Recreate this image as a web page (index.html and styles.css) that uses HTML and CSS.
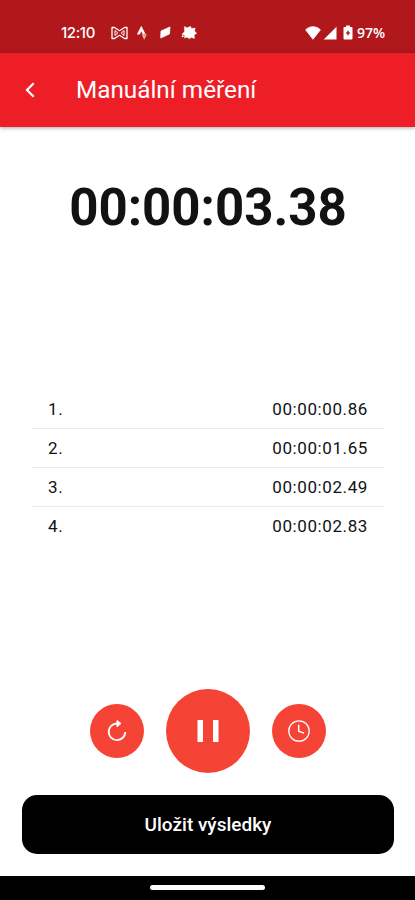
FILE: index.html
```html
<!DOCTYPE html>
<html lang="cs">
<head>
    <meta charset="UTF-8">
    <meta name="viewport" content="width=device-width, initial-scale=1">
    <title>Manuální měření</title>
    <link rel="stylesheet" href="styles.css">
</head>
<body>
    <div class="status-bar">
        <span class="clock">12:10</span>
        <div class="notifications">
            <svg width="17" height="14" viewBox="0 0 17 14" fill="none" stroke="#fff" stroke-width="1.3" stroke-linejoin="round">
                <path d="M1 1.500h2.500l5 3.200 5-3.200H16v11h-2.500l-5-3.200-5 3.200H1z"/>
                <path d="M4 4.500v5l2.800-2.500zM13 4.500v5L10.200 7z" stroke-width="1"/>
            </svg>
            <svg width="11" height="14" viewBox="0 0 11 14">
                <path d="M4.300.3l4 7.900H6.100L4.300 5 2.600 8.200H.3z" fill="#fff" stroke="#fff" stroke-width=".5"/>
                <path d="M4.700 8.300h1.600l.9 1.800.9-1.800h1.700L7.200 13.700z" fill="#f3b8b4"/>
            </svg>
            <svg width="11" height="13" viewBox="0 0 11 13">
                <path d="M1 5L10 1 9.400 8 .7 12z" fill="#fff" stroke="#fff" stroke-width=".8" stroke-linejoin="round"/>
            </svg>
            <svg width="16" height="14" viewBox="0 0 16 14">
                <path d="M3.300.5l3 1.300L9.500.3l1 2.200 3.700-.5-.7 3 2.300 2.300-2.600 1.600.3 3.500-3.200-.8-2.100 1.200-2-1.500L3.500 12l.2-2.800L.8 8.300l2.700-2.600z" fill="#fff" stroke="#fff" stroke-width=".4"/>
                <circle cx="1.700" cy="10.300" r="1" fill="#fff"/>
            </svg>
        </div>
        <div class="indicators">
            <svg width="16" height="14" viewBox="0 0 16 14">
                <path d="M.6 3.800C4.800-.3 11.200-.3 15.400 3.800L8 13.300z" fill="#fff" stroke="#fff" stroke-width=".8" stroke-linejoin="round"/>
            </svg>
            <svg class="signal" width="14" height="14" viewBox="0 0 14 14">
                <path d="M13.500.7v12.800H.7z" fill="#fff"/>
            </svg>
            <svg class="battery" width="10" height="15" viewBox="0 0 10 15">
                <path d="M3 .5h4V2h1.500Q9.500 2 9.500 3v10.500q0 1-1 1h-7q-1 0-1-1V3q0-1 1-1H3z" fill="#fff"/>
                <path d="M5 5.800v4.400M3.200 8h3.600" stroke="#b1181b" stroke-width="1.400"/>
            </svg>
            <span class="percent">97%</span>
        </div>
    </div>

    <header class="app-bar">
        <svg class="back" width="12" height="18" viewBox="0 0 12 18" fill="none" stroke="#fff" stroke-width="2.200">
            <path d="M9.700 2.300L3 9l6.700 6.700"/>
        </svg>
        <h1>Manuální měření</h1>
    </header>

    <main>
        <div class="timer">00:00:03.38</div>

        <ol class="laps">
            <li><span>1.</span><span>00:00:00.86</span></li>
            <li><span>2.</span><span>00:00:01.65</span></li>
            <li><span>3.</span><span>00:00:02.49</span></li>
            <li><span>4.</span><span>00:00:02.83</span></li>
        </ol>

        <div class="controls">
            <button class="round" aria-label="Vynulovat">
                <svg width="22" height="24" viewBox="0 0 22 24" fill="none" stroke="#fff" stroke-width="1.900">
                    <path d="M12 4.500h-1A8.300 8.300 0 1 0 19.300 13"/>
                    <path d="M11 1.500l4 3-4 3.300z" fill="#fff" stroke-width="1"/>
                </svg>
            </button>
            <button class="round big" aria-label="Pozastavit">
                <svg width="22" height="24" viewBox="0 0 22 24" fill="#fff">
                    <path d="M.5 1H6v22H.5zM16 1h5.500v22H16z"/>
                </svg>
            </button>
            <button class="round" aria-label="Mezičas">
                <svg width="24" height="24" viewBox="0 0 24 24" fill="none" stroke="#fff" stroke-width="1.300">
                    <circle cx="12" cy="12" r="10.200"/>
                    <path d="M11.700 5.700v6.600l5.300 1.800" stroke-width="1.500"/>
                </svg>
            </button>
        </div>

        <button class="save">Uložit výsledky</button>
    </main>

    <div class="nav-bar"><div class="handle"></div></div>
</body>
</html>
```

FILE: styles.css
```css
* {
    box-sizing: border-box;
}
body {
    font-family: Roboto, "Noto Sans", sans-serif;
    display: flex;
    flex-direction: column;
    height: 900px;
    margin: 0;
    background: #fff;
    color: #101214;
}
svg {
    display: block;
    flex: none;
}
button {
    border: 0;
    padding: 0;
    font-family: inherit;
    color: #fff;
}
.status-bar {
    display: flex;
    align-items: center;
    height: 53px;
    padding: 12px 30px 0 61px;
    background: #b1181b;
    color: #fff;
    font-size: 15px;
}
.clock {
    width: 50px;
    font-family: Inter, sans-serif;
    font-weight: 500;
    letter-spacing: -0.4px;
}
.notifications {
    display: flex;
    align-items: center;
    gap: 10px;
}
.notifications svg:nth-child(2) {
    margin-left: -1px;
}
.notifications svg:nth-child(3) {
    margin-left: 2px;
}
.indicators {
    display: flex;
    align-items: center;
    margin-left: auto;
}
.signal {
    margin-left: 2px;
}
.battery {
    margin: 0 4px 0 6px;
}
.percent {
    font-family: "Open Sans", sans-serif;
    font-weight: 600;
    font-size: 14px;
}
.app-bar {
    display: flex;
    align-items: center;
    height: 74px;
    padding-left: 24px;
    background: #ee1e27;
    color: #fff;
    box-shadow: 0 1px 4px rgba(0, 0, 0, 0.35);
}
.app-bar h1 {
    margin: 0 0 2px 40px;
    font-size: 24.300px;
    font-weight: 400;
}
main {
    flex: 1;
    display: flex;
    flex-direction: column;
    padding: 0 21px 22px 22px;
}
.timer {
    margin-top: 51px;
    height: 60px;
    line-height: 60px;
    text-align: center;
    font-size: 51px;
    font-weight: 700;
}
.laps {
    list-style: none;
    margin: 152px 10px 0;
    padding: 0;
}
.laps li {
    display: flex;
    justify-content: space-between;
    align-items: center;
    height: 39px;
    padding: 0 16px 1px;
    font-size: 17px;
    letter-spacing: 0.6px;
    border-bottom: 1px solid #ebebeb;
}
.laps li:last-child {
    height: 38px;
    border-bottom: 0;
}
.controls {
    display: flex;
    justify-content: center;
    align-items: center;
    gap: 22px;
    margin-top: auto;
}
.round {
    display: grid;
    place-items: center;
    width: 54px;
    height: 54px;
    border-radius: 50%;
    background: #f54336;
}
.round.big {
    width: 84px;
    height: 84px;
}
.save {
    height: 59px;
    margin-top: 22px;
    border-radius: 15px;
    background: #000;
    font-size: 19px;
    font-weight: 500;
}
.nav-bar {
    display: flex;
    justify-content: center;
    height: 24px;
    padding-top: 9px;
    background: #000;
}
.handle {
    width: 115px;
    height: 5px;
    border-radius: 3px;
    background: #fff;
}
```
